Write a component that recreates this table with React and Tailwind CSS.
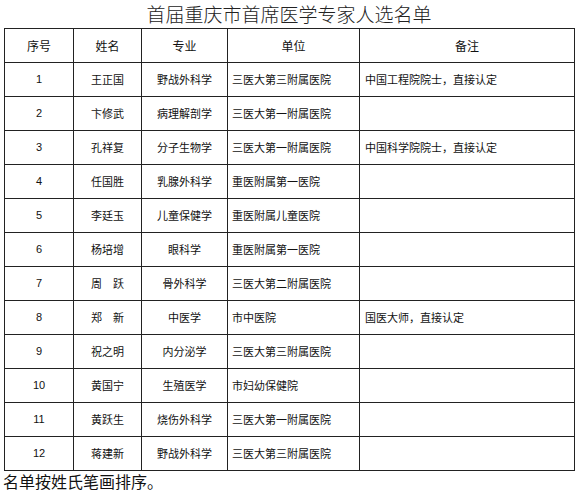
import React from "react";

export default function App() {
  const rows = [
    ["1", "王正国", "野战外科学", "三医大第三附属医院", "中国工程院院士，直接认定"],
    ["2", "卞修武", "病理解剖学", "三医大第一附属医院", ""],
    ["3", "孔祥复", "分子生物学", "三医大第一附属医院", "中国科学院院士，直接认定"],
    ["4", "任国胜", "乳腺外科学", "重医附属第一医院", ""],
    ["5", "李廷玉", "儿童保健学", "重医附属儿童医院", ""],
    ["6", "杨培增", "眼科学", "重医附属第一医院", ""],
    ["7", "周　跃", "骨外科学", "三医大第二附属医院", ""],
    ["8", "郑　新", "中医学", "市中医院", "国医大师，直接认定"],
    ["9", "祝之明", "内分泌学", "三医大第三附属医院", ""],
    ["10", "黄国宁", "生殖医学", "市妇幼保健院", ""],
    ["11", "黄跃生", "烧伤外科学", "三医大第一附属医院", ""],
    ["12", "蒋建新", "野战外科学", "三医大第三附属医院", ""],
  ];

  const cell = "border border-[#222] text-[11px]";

  return (
    <div className="w-[580px] h-[493px] bg-white text-[#111] font-['Noto_Sans_CJK_SC',sans-serif] overflow-hidden">
      <div className="w-[570px] ml-[4px]">
        {/* Title */}
        <div className="h-[28px] flex items-center justify-center text-[19px] font-light text-[#222] pt-[1px]">
          首届重庆市首席医学专家人选名单
        </div>

        {/* Table */}
        <table className="w-[570px] table-fixed border-collapse">
          <colgroup>
            <col className="w-[69px]" />
            <col className="w-[68px]" />
            <col className="w-[86px]" />
            <col className="w-[132px]" />
            <col className="w-[215px]" />
          </colgroup>
          <thead>
            <tr className="h-[34px]">
              <th className={`${cell} font-normal text-[12px]`}>序号</th>
              <th className={`${cell} font-normal text-[12px]`}>姓名</th>
              <th className={`${cell} font-normal text-[12px]`}>专业</th>
              <th className={`${cell} font-normal text-[12px]`}>单位</th>
              <th className={`${cell} font-normal text-[12px]`}>备注</th>
            </tr>
          </thead>
          <tbody>
            {rows.map((r, i) => (
              <tr key={i} className="h-[34px]">
                <td className={`${cell} text-center font-['Liberation_Sans',sans-serif]`}>{r[0]}</td>
                <td className={`${cell} text-center`}>{r[1]}</td>
                <td className={`${cell} text-center`}>{r[2]}</td>
                <td className={`${cell} pl-[4px]`}>{r[3]}</td>
                <td className={`${cell} pl-[5px]`}>{r[4]}</td>
              </tr>
            ))}
          </tbody>
        </table>
      </div>

      {/* Footer note */}
      <div className="pl-[3px] text-[16px] leading-[20px] text-[#111]">
        名单按姓氏笔画排序。
      </div>
    </div>
  );
}
